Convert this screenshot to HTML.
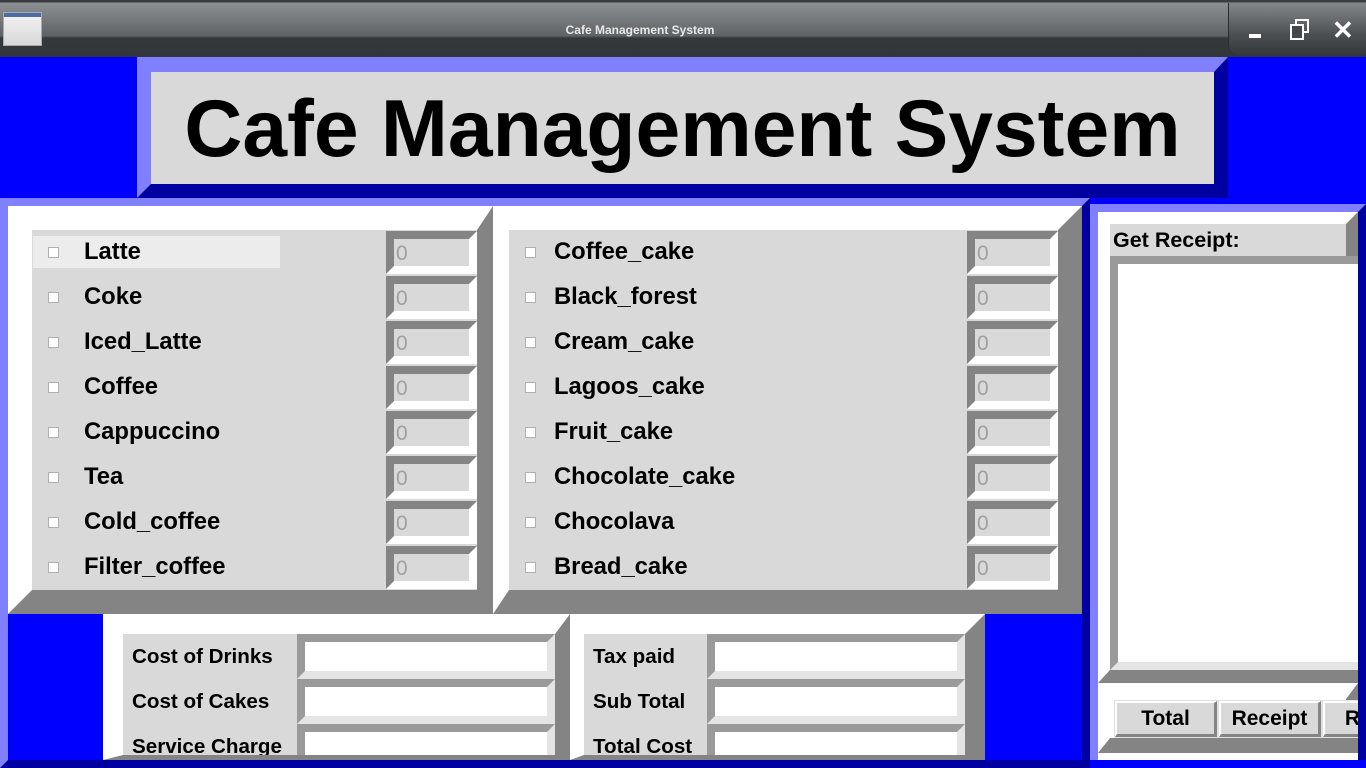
<!DOCTYPE html>
<html><head><meta charset="utf-8"><style>
*{margin:0;padding:0;box-sizing:border-box}
body{width:1366px;height:768px;overflow:hidden;background:#0000ff;font-family:"Liberation Sans",sans-serif;position:relative}
.a{position:absolute}
.tb{left:0;top:0;width:1366px;height:57px;background:linear-gradient(#3a3d40 0,#3a3d40 2px,#8d9093 3px,#5f6265 36px,#34383b 38px,#32363a 57px)}
.bev{border-style:solid}
.lbl{font-weight:bold;font-size:23.8px;color:#000}
.cb{width:11px;height:11px;background:#fff;border:1px solid #b0b0b0}
.en{width:91px;height:43px;border-style:solid;border-width:8px;border-color:#848484 #fff #fff #848484;background:#d9d9d9;color:#a0a0a0;font-size:21px;padding-left:2px;line-height:29px}
.en2{height:45px;border-style:solid;border-width:8px;border-color:#9a9a9a #e4e4e4 #e4e4e4 #9a9a9a;background:#fff}
.sl{font-weight:bold;font-size:20.6px}
.btn{height:38px;border:1px solid #e0e0e0;background:#fff;padding:0}
.btn div{width:100%;height:100%;border-style:solid;border-width:2px 3px 3px 2px;border-color:#fff #848484 #848484 #fff;background:#d9d9d9;font-weight:bold;font-size:21px;text-align:center;line-height:31px}
</style></head><body>
<div class="a tb"></div>
<div class="a" style="left:3px;top:12px;width:39px;height:34px;background:linear-gradient(#f4f4f4,#d8d8d8);border:1px solid #aaa"><div style="height:4px;background:#4a6da8"></div></div>
<div class="a" style="left:0;top:23px;width:1280px;text-align:center;color:#e8e8e8;font-size:12px;font-weight:bold">Cafe Management System</div>
<div class="a" style="left:1228px;top:3px;width:138px;height:52px;border-radius:0 0 0 10px;background:linear-gradient(#85888b,#4d5053 60%,#34383b);border-left:1px solid #2a2d30"></div>
<div class="a" style="left:1249px;top:34px;width:12px;height:4px;background:#fff"></div>
<div class="a" style="left:1295px;top:19px;width:14px;height:14px;border:2px solid #fff"></div>
<div class="a" style="left:1290px;top:24px;width:14px;height:16px;border:2px solid #fff;background:#43474a"></div>
<div class="a" style="left:1332px;top:15px;color:#fff;font-size:26px;font-weight:bold;line-height:30px">✕</div>

<div class="a bev" style="left:137px;top:57px;width:1091px;height:141px;border-width:15px 14px 14px 14px;border-color:#8080ff #0000a0 #0000a0 #8080ff;background:#d9d9d9"></div>
<div class="a" style="left:151px;top:83px;width:1063px;text-align:center;font-weight:bold;font-size:80.4px;line-height:92px">Cafe Management System</div>

<div class="a bev" style="left:0;top:198px;width:1090px;height:570px;border-width:8px;border-color:#8080ff #0000a0 #0000a0 #8080ff;background:#fff"></div>
<div class="a bev" style="left:8px;top:206px;width:485px;height:408px;border-width:24px 16px 24px 24px;border-color:#fff #848484 #848484 #fff;background:#d9d9d9"></div>
<div class="a bev" style="left:493px;top:206px;width:589px;height:408px;border-width:24px 24px 24px 16px;border-color:#fff #848484 #848484 #fff;background:#d9d9d9"></div>
<div class="a" style="left:33px;top:236px;width:247px;height:32px;background:#ececec"></div>

<div class="a" style="left:8px;top:614px;width:95px;height:146px;background:#0000ff"></div>
<div class="a" style="left:985px;top:614px;width:97px;height:146px;background:#0000ff"></div>
<div class="a bev" style="left:103px;top:614px;width:467px;height:146px;border-width:20px 15px 5px 20px;border-color:#fff #848484 #848484 #fff;background:#d9d9d9"></div>
<div class="a bev" style="left:570px;top:614px;width:415px;height:146px;border-width:20px 20px 5px 14px;border-color:#fff #848484 #848484 #fff;background:#d9d9d9"></div>

<div class="a cb" style="left:48px;top:247px"></div><div class="a lbl" style="left:84px;top:238px">Latte</div>
<div class="a cb" style="left:48px;top:292px"></div><div class="a lbl" style="left:84px;top:283px">Coke</div>
<div class="a cb" style="left:48px;top:337px"></div><div class="a lbl" style="left:84px;top:328px">Iced_Latte</div>
<div class="a cb" style="left:48px;top:382px"></div><div class="a lbl" style="left:84px;top:373px">Coffee</div>
<div class="a cb" style="left:48px;top:427px"></div><div class="a lbl" style="left:84px;top:418px">Cappuccino</div>
<div class="a cb" style="left:48px;top:472px"></div><div class="a lbl" style="left:84px;top:463px">Tea</div>
<div class="a cb" style="left:48px;top:517px"></div><div class="a lbl" style="left:84px;top:508px">Cold_coffee</div>
<div class="a cb" style="left:48px;top:562px"></div><div class="a lbl" style="left:84px;top:553px">Filter_coffee</div>
<div class="a en" style="left:386px;top:231px">0</div>
<div class="a en" style="left:386px;top:276px">0</div>
<div class="a en" style="left:386px;top:321px">0</div>
<div class="a en" style="left:386px;top:366px">0</div>
<div class="a en" style="left:386px;top:411px">0</div>
<div class="a en" style="left:386px;top:456px">0</div>
<div class="a en" style="left:386px;top:501px">0</div>
<div class="a en" style="left:386px;top:546px">0</div>
<div class="a cb" style="left:525px;top:247px"></div><div class="a lbl" style="left:554px;top:238px">Coffee_cake</div>
<div class="a cb" style="left:525px;top:292px"></div><div class="a lbl" style="left:554px;top:283px">Black_forest</div>
<div class="a cb" style="left:525px;top:337px"></div><div class="a lbl" style="left:554px;top:328px">Cream_cake</div>
<div class="a cb" style="left:525px;top:382px"></div><div class="a lbl" style="left:554px;top:373px">Lagoos_cake</div>
<div class="a cb" style="left:525px;top:427px"></div><div class="a lbl" style="left:554px;top:418px">Fruit_cake</div>
<div class="a cb" style="left:525px;top:472px"></div><div class="a lbl" style="left:554px;top:463px">Chocolate_cake</div>
<div class="a cb" style="left:525px;top:517px"></div><div class="a lbl" style="left:554px;top:508px">Chocolava</div>
<div class="a cb" style="left:525px;top:562px"></div><div class="a lbl" style="left:554px;top:553px">Bread_cake</div>
<div class="a en" style="left:967px;top:231px">0</div>
<div class="a en" style="left:967px;top:276px">0</div>
<div class="a en" style="left:967px;top:321px">0</div>
<div class="a en" style="left:967px;top:366px">0</div>
<div class="a en" style="left:967px;top:411px">0</div>
<div class="a en" style="left:967px;top:456px">0</div>
<div class="a en" style="left:967px;top:501px">0</div>
<div class="a en" style="left:967px;top:546px">0</div>

<div class="a" style="left:123px;top:634px;width:432px;height:121px;overflow:hidden">
<div class="a sl" style="left:9px;top:11px">Cost of Drinks</div>
<div class="a sl" style="left:9px;top:56px">Cost of Cakes</div>
<div class="a sl" style="left:9px;top:101px">Service Charge</div>
<div class="a en2" style="left:174px;top:0;width:258px"></div>
<div class="a en2" style="left:174px;top:45px;width:258px"></div>
<div class="a en2" style="left:174px;top:90px;width:258px"></div>
</div>
<div class="a" style="left:584px;top:634px;width:381px;height:121px;overflow:hidden">
<div class="a sl" style="left:9px;top:11px">Tax paid</div>
<div class="a sl" style="left:9px;top:56px">Sub Total</div>
<div class="a sl" style="left:9px;top:101px">Total Cost</div>
<div class="a en2" style="left:123px;top:0;width:258px"></div>
<div class="a en2" style="left:123px;top:45px;width:258px"></div>
<div class="a en2" style="left:123px;top:90px;width:258px"></div>
</div>

<div class="a bev" style="left:1090px;top:204px;width:276px;height:564px;border-width:8px;border-color:#8080ff #0000a0 #0000a0 #8080ff;background:#fff"></div>
<div class="a" style="left:1090px;top:760px;width:276px;height:8px;background:#0000ff"></div>
<div class="a bev" style="left:1098px;top:212px;width:260px;height:471px;border-width:12px 12px 13px 12px;border-color:#fff #848484 #848484 #fff;background:#d9d9d9"></div>
<div class="a sl" style="left:1113px;top:228px;font-size:21.5px">Get Receipt:</div>
<div class="a bev" style="left:1110px;top:256px;width:248px;height:414px;border-width:8px 0 8px 8px;border-color:#9a9a9a #e4e4e4 #e4e4e4 #9a9a9a;background:#fff"></div>
<div class="a bev" style="left:1098px;top:683px;width:260px;height:70px;border-width:16px 12px 15px 12px;border-color:#fff #848484 #848484 #fff;background:#fff"></div>
<div class="a" style="left:1110px;top:699px;width:248px;height:39px;overflow:hidden">
<div class="a btn" style="left:4px;top:1px;width:104px"><div>Total</div></div>
<div class="a btn" style="left:108px;top:1px;width:104px"><div>Receipt</div></div>
<div class="a btn" style="left:212px;top:1px;width:104px"><div>Reset</div></div>
</div>
</body></html>
